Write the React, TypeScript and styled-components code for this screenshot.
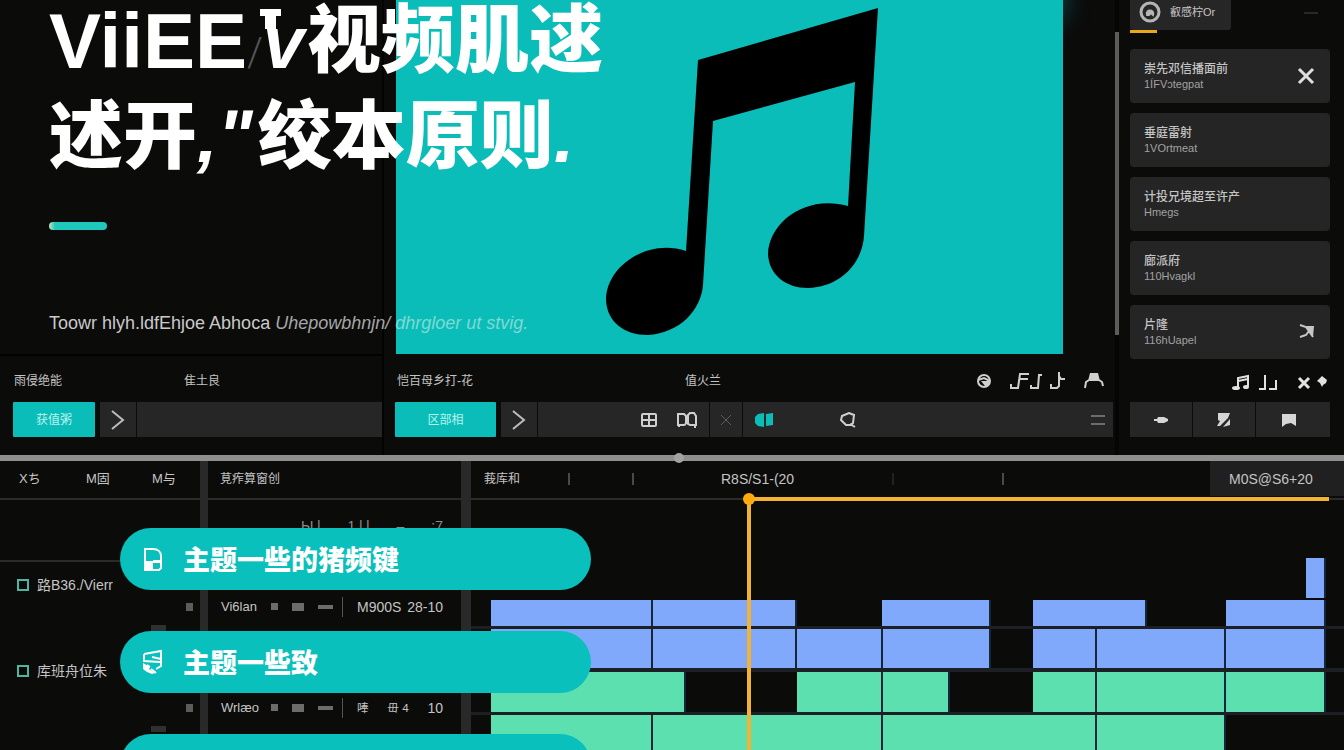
import React from "react";
import styled, { createGlobalStyle } from "styled-components";

const teal = "#0bbdb8";
const panel = "#262626";
const ink = "#c4c4c4";
const blue = "#80a8fb";
const green = "#5ce0b0";
const amber = "#f2b234";

const Global = createGlobalStyle`
  *, *::before, *::after { box-sizing: border-box; }
  body {
    margin: 0;
    background: #0b0b0a;
    color: ${ink};
    font-family: "Liberation Sans", "Noto Sans CJK SC", sans-serif;
    font-size: 12px;
    line-height: 16px;
  }
  button { font: inherit; color: inherit; border: 0; padding: 0; background: none; cursor: pointer; }
  h1, h2, p, ul { margin: 0; padding: 0; font-weight: inherit; font-size: inherit; }
  ul { list-style: none; }
  svg { display: block; flex: none; }
`;

const Page = styled.div`
  display: flex;
  flex-direction: column;
  min-height: 100vh;
  overflow: hidden;
`;

/* ---------- upper half ---------- */

const Upper = styled.section`
  position: relative;
  display: grid;
  grid-template-columns: 384px minmax(0, 1fr) 4px 225px;
  height: 455px;
`;

const LeftPane = styled.div`
  display: flex;
  flex-direction: column;
  border-right: 2px solid #030303;
`;

const LeftBlank = styled.div`
  height: 356px;
  border-bottom: 2px solid #020202;
`;

const CenterPane = styled.div`
  display: flex;
  flex-direction: column;
`;

const Stage = styled.div`
  height: 354px;
  margin: 0 52px 2px 12px;
  background: ${teal};
  box-shadow: 24px -310px 24px -24px rgba(11, 189, 184, 0.4);
  svg { width: 100%; height: 354px; }
`;

const Captions = styled.div<{ $inset: number; $h?: number }>`
  display: flex;
  align-items: center;
  height: ${(p) => p.$h ?? 46}px;
  padding: 4px 0 0 ${(p) => p.$inset}px;
`;

const Caption = styled.span<{ $w?: number }>`
  width: ${(p) => (p.$w ? `${p.$w}px` : "auto")};
  white-space: nowrap;
`;

const CaptionTools = styled.div<{ $gap: number; $end: number }>`
  display: flex;
  align-items: center;
  gap: ${(p) => p.$gap}px;
  margin-left: auto;
  padding-right: ${(p) => p.$end}px;
`;

const Bar = styled.div<{ $inset: number; $end: number }>`
  display: flex;
  height: 35px;
  gap: 1px;
  padding: 0 ${(p) => p.$end}px 0 ${(p) => p.$inset}px;
`;

const Primary = styled.button<{ $w: number }>`
  width: ${(p) => p.$w}px;
  margin-right: 4px;
  background: ${teal};
  color: #b9f3ee;
  border-radius: 1px;
`;

const Cell = styled.button<{ $w?: number }>`
  display: flex;
  align-items: center;
  justify-content: center;
  flex: ${(p) => (p.$w ? `0 0 ${p.$w}px` : "1 1 0")};
  background: ${panel};
`;

const Field = styled.div<{ $w?: number; $gap?: number }>`
  display: flex;
  align-items: center;
  flex: ${(p) => (p.$w ? `0 0 ${p.$w}px` : "1 1 0")};
  justify-content: ${(p) => (p.$w ? "flex-end" : "flex-start")};
  gap: ${(p) => p.$gap ?? 0}px;
  padding: 0 12px;
  background: ${panel};
  button:last-child:nth-child(3) { margin-left: auto; margin-right: -4px; }
`;

const ScrollTrack = styled.div`
  padding-top: 32px;
  background: #050505;
`;

const ScrollThumb = styled.div`
  height: 303px;
  background: #5c5c5c;
`;

const RightPane = styled.aside`
  display: flex;
  flex-direction: column;
  padding: 0 14px 0 11px;
`;

const TabRow = styled.div`
  display: flex;
  height: 49px;
`;

const Tab = styled.button`
  position: relative;
  display: flex;
  align-items: center;
  gap: 9px;
  width: 101px;
  height: 30px;
  padding: 0 9px 7px;
  background: ${panel};
  border-radius: 0 0 3px 3px;
  font-size: 11px;
  &::after {
    content: "";
    position: absolute;
    left: 0;
    top: 30px;
    width: 27px;
    height: 3px;
    background: #eaa81e;
  }
`;

const Dash = styled.span`
  width: 14px;
  height: 2px;
  margin: 12px 12px 0 auto;
  background: #292929;
`;

const Cards = styled.ul`
  display: flex;
  flex-direction: column;
  gap: 10px;
`;

const Card = styled.li`
  display: flex;
  justify-content: space-between;
  height: 54px;
  padding: 12px 14px 0;
  border-radius: 4px;
  background: #252525;
`;

const CardTitle = styled.h2`
  font-size: 12px;
  line-height: 16px;
  font-weight: 500;
`;

const CardNote = styled.p`
  font-size: 11px;
  line-height: 14px;
  color: #a2a2a2;
`;

const CardAction = styled.button`
  align-self: flex-start;
  padding-top: 6px;
`;

const Hero = styled.header`
  position: absolute;
  left: 49px;
  top: 0;
  color: #fff;
`;

const Title = styled.h1`
  display: flex;
  flex-direction: column;
  gap: 28px;
  font-family: "Noto Sans CJK SC", sans-serif;
  font-weight: 900;
  font-size: 74px;
  line-height: 68px;
  white-space: nowrap;
`;

const TitleLine = styled.span`
  display: block;
  height: 68px;
`;

const Latin = styled.span`
  font-family: "Liberation Sans", sans-serif;
  font-weight: 700;
  font-size: 78px;
  line-height: 0;
  vertical-align: -2px;
`;

const Slash = styled.span`
  font-family: Roboto, sans-serif;
  font-size: 40px;
  line-height: 0;
  font-weight: 300;
  color: #555;
`;

const Vee = styled.span`
  position: relative;
  padding-right: 3px;
  font-family: "Liberation Sans", sans-serif;
  font-size: 74px;
  line-height: 0;
  font-style: italic;
  vertical-align: -2px;
  &::before {
    content: "";
    position: absolute;
    left: -3px;
    top: 8px;
    width: 21px;
    height: 7px;
    background: #fff;
  }
  &::after {
    content: "";
    position: absolute;
    left: 2px;
    top: 8px;
    width: 11px;
    height: 20px;
    background: #fff;
  }
`;

const Point = styled.span<{ $pad?: number }>`
  padding-right: ${(p) => p.$pad ?? 0}px;
  font-family: "Liberation Sans", sans-serif;
  font-style: italic;
  line-height: 0;
`;

const Accent = styled.div`
  width: 58px;
  height: 8px;
  margin: 58px 0 81px;
  border-radius: 4px;
  background: linear-gradient(90deg, #cfe0b8, #1ec8bd 6px);
`;

const Tagline = styled.p`
  font-size: 18px;
  line-height: 24px;
  color: #c9c9c9;
  white-space: nowrap;
  i { color: #7fd9d5; }
  em { color: #a6a6a6; }
`;

/* ---------- splitter ---------- */

const Splitter = styled.div`
  position: relative;
  height: 6px;
  background: #8f8f8f;
  &::after {
    content: "";
    position: absolute;
    left: 50%;
    top: -2px;
    width: 10px;
    height: 10px;
    margin-left: 2px;
    border-radius: 50%;
    background: #a3a3a3;
  }
`;

/* ---------- lower half ---------- */

const Lower = styled.section`
  position: relative;
  display: grid;
  grid-template-columns: 200px 261px minmax(0, 1fr);
  flex: 1 0 289px;
  height: 289px;
  overflow: hidden;
`;

const Head = styled.div<{ $inset: number }>`
  display: flex;
  align-items: center;
  height: 39px;
  padding: 0 0 2px ${(p) => p.$inset}px;
  border-bottom: 2px solid #2b2b2b;
`;

const MenuButton = styled.button<{ $w: number }>`
  width: ${(p) => p.$w}px;
  text-align: left;
  font-size: 13px;
`;

const Names = styled.div`
  height: 62px;
  border-bottom: 2px solid #2b2b2b;
`;

const TrackCols = styled.div`
  display: flex;
  justify-content: space-between;
`;

const TrackNames = styled.div`
  display: flex;
  flex-direction: column;
  gap: 62px;
  padding: 11px 0 0 17px;
`;

const TrackLabel = styled.label`
  display: flex;
  align-items: center;
  gap: 8px;
  height: 24px;
  font-size: 14px;
  white-space: nowrap;
`;

const Tick = styled.input`
  appearance: none;
  width: 12px;
  height: 12px;
  margin: 0;
  border: 2px solid #4fb5a3;
`;

const Flags = styled.div`
  width: 49px;
`;

const Flag = styled.div`
  display: flex;
  flex-direction: column;
  gap: 14px;
  height: 101px;
  padding-top: 41px;
  &::before { content: ""; width: 7px; height: 8px; margin-left: 35px; background: #5c5c5c; }
  &::after { content: ""; width: 15px; height: 6px; background: #303030; }
`;

const Middle = styled.div`
  border-left: 8px solid #292929;
`;

const Meta = styled.div<{ $h: number; $dim?: boolean }>`
  display: flex;
  align-items: center;
  height: ${(p) => p.$h}px;
  padding: 0 18px 0 13px;
  font-size: 14px;
  white-space: nowrap;
  color: ${(p) => (p.$dim ? "#8c8c8c" : ink)};
`;

const MetaName = styled.span`
  width: 50px;
  font-size: 13px;
`;

const Chip = styled.span<{ $w: number; $h: number }>`
  width: ${(p) => p.$w}px;
  height: ${(p) => p.$h}px;
  margin-right: 14px;
  background: #6c6c6c;
`;

const Rule = styled.span`
  width: 1px;
  height: 20px;
  margin: 0 14px 0 -5px;
  background: #555;
`;

const Push = styled.span<{ $lead?: number }>`
  display: flex;
  justify-content: space-between;
  flex: 1;
  padding-left: ${(p) => p.$lead ?? 0}px;
`;

const Timeline = styled.div`
  position: relative;
  display: flex;
  flex-direction: column;
  border-left: 10px solid #292929;
`;

const Ruler = styled.div`
  display: grid;
  grid-template-columns: 97fr 64fr 89fr 171fr 110fr 208fr 134fr;
  align-items: center;
  height: 39px;
  padding-bottom: 2px;
  border-bottom: 2px solid #2b2b2b;
  font-size: 14px;
  white-space: nowrap;
`;

const Mark = styled.span<{ $dim?: boolean }>`
  width: 2px;
  height: 12px;
  background: ${(p) => (p.$dim ? "#222" : "#4a4a4a")};
`;

const First = styled.span`
  padding-left: 13px;
  font-size: 12px;
`;

const EndStamp = styled.span`
  display: flex;
  align-items: center;
  align-self: stretch;
  padding-left: 19px;
  background: #202020;
`;

const Tracks = styled.div`
  display: flex;
  flex-direction: column;
  flex: 1;
  padding-top: 58px;
`;

const Track = styled.div<{ $h: number; $line: number; $bare?: boolean }>`
  display: flex;
  flex: ${(p) => (p.$h ? `0 0 ${p.$h}px` : "1 0 35px")};
  padding: 0 18px 0 20px;
  border-bottom: ${(p) => p.$line}px solid ${(p) => (p.$bare ? "#0b0b0a" : "#1c1f24")};
`;

const Clip = styled.div<{ $span: number; $color: string }>`
  flex: ${(p) => p.$span} 1 0;
  min-width: 0;
  background: ${(p) => p.$color};
  box-shadow: ${(p) => (p.$color === "transparent" ? "none" : "inset -2px 0 #17273a")};
`;

const Playhead = styled.div`
  position: absolute;
  left: 276px;
  right: 15px;
  top: 36px;
  bottom: 0;
  border-top: 4px solid ${amber};
  border-left: 4px solid ${amber};
  &::before {
    content: "";
    position: absolute;
    left: -8px;
    top: -8px;
    width: 12px;
    height: 12px;
    border-radius: 50%;
    background: #ffab0d;
  }
`;

const Pills = styled.div`
  position: absolute;
  left: 120px;
  top: 67px;
  display: flex;
  flex-direction: column;
  gap: 41px;
  width: 471px;
`;

const Pill = styled.button`
  display: flex;
  align-items: center;
  gap: 19px;
  height: 62px;
  padding-left: 21px;
  border-radius: 31px;
  background: #0ac0bc;
  color: #fff;
  font-family: "Noto Sans CJK SC", sans-serif;
  font-size: 27px;
  font-weight: 900;
`;

/* ---------- drawings ---------- */

type IconProps = { w: number; h: number; children: React.ReactNode; color?: string; sw?: number };

const Icon = ({ w, h, children, color = "#cfcfcf", sw = 2 }: IconProps) => (
  <svg width={w} height={h} viewBox={`0 0 ${w} ${h}`} fill="none" stroke={color} strokeWidth={sw} aria-hidden="true">
    {children}
  </svg>
);

const Chevron = () => (
  <Icon w={14} h={20} color="#bdbdbd">
    <path d="M1 1L12 10L1 19" />
  </Icon>
);

const BigNote = () => (
  <svg viewBox="396 0 667 354" preserveAspectRatio="xMidYMax meet" aria-hidden="true">
    <path
      d="M698 60L878 8L864 236C862 264 840 287 808 288C786 288 769 275 768 254C769 222 806 194 848 206L855 82L713 121L703 285C701 310 680 333 648 335C624 335 607 322 606 300C606 266 648 238 686 251Z"
      fill="#000"
    />
  </svg>
);

const cards = [
  { title: "崇先邓信播面前", note: "1ÍFVɔtegpat", action: "close" },
  { title: "垂庭雷射", note: "1VOrtmeat" },
  { title: "计投兄境超至许产", note: "Hmegs" },
  { title: "廊派府", note: "110Hvagkl" },
  { title: "片隆", note: "116hUapel", action: "send" },
];

const b = (n: number): [number, string] => [n, blue];
const g = (n: number): [number, string] => [n, green];
const x = (n: number): [number, string] => [n, "transparent"];

const tracks: { h: number; line: number; clips: [number, string][]; bare?: boolean }[] = [
  { h: 42, line: 2, bare: true, clips: [x(815), b(20)] },
  { h: 29, line: 3, clips: [b(162), b(144), x(85), b(109), x(42), b(114), x(79), b(100)] },
  { h: 43, line: 4, clips: [b(162), b(144), b(86), b(108), x(42), b(64), b(129), b(100)] },
  { h: 43, line: 3, clips: [g(195), x(111), g(86), g(67), x(83), g(64), g(129), g(100)] },
  { h: 0, line: 0, clips: [g(162), g(230), g(214), g(129), x(100)] },
];

export default function App() {
  return (
    <>
      <Global />
      <Page>
        <Upper>
          <LeftPane>
            <LeftBlank />
            <Captions $inset={14}>
              <Caption $w={170}>雨侵绝能</Caption>
              <Caption>隹土良</Caption>
            </Captions>
            <Bar $inset={13} $end={0}>
              <Primary $w={82}>获值粥</Primary>
              <Cell $w={36} aria-label="Next"><Chevron /></Cell>
              <Field />
            </Bar>
          </LeftPane>

          <CenterPane>
            <Stage><BigNote /></Stage>
            <Captions $inset={13}>
              <Caption $w={288}>恺百母乡打-花</Caption>
              <Caption>值火兰</Caption>
              <CaptionTools $gap={18} $end={11}>
                <Icon w={16} h={16}>
                  <circle cx="8" cy="8" r="6" />
                  <path d="M2 7L8 5L14 8" />
                  <path d="M5 8H14L12 13H9Z" fill="#cfcfcf" stroke="none" />
                </Icon>
                <CaptionTools $gap={8} $end={0}>
                  <Icon w={32} h={18}>
                    <path d="M1 12V16H8L10 2H19M10 7H18M21 13V16H28L29 3H32" />
                  </Icon>
                  <Icon w={16} h={18}>
                    <path d="M9 0V14L7 16H1V12M9 4L11 7H15" />
                  </Icon>
                </CaptionTools>
                <Icon w={20} h={16}>
                  <path d="M6 0H14L16 8H4Z" fill="#cfcfcf" stroke="none" />
                  <path d="M5 7L2 9L1 15M15 7L18 9L19 13" />
                </Icon>
              </CaptionTools>
            </Captions>
            <Bar $inset={11} $end={2}>
              <Primary $w={101}>区部相</Primary>
              <Cell $w={36} aria-label="Next"><Chevron /></Cell>
              <Field $w={171} $gap={20}>
                <button aria-label="Grid">
                  <Icon w={16} h={16}>
                    <rect x="1" y="2" width="14" height="12" rx="1" />
                    <path d="M8 2V14M1 8H15" />
                  </Icon>
                </button>
                <button aria-label="Pages">
                  <Icon w={20} h={16}>
                    <path d="M9 12L7 13H1V2H7L9 4V12M11 12V3L13 1H17L19 4V13H13ZM2 15V12M18 16V12" />
                  </Icon>
                </button>
              </Field>
              <Cell $w={32} aria-label="Clear">
                <Icon w={10} h={10} color="#5c5c5c" sw={1}><path d="M0 0L10 10M10 0L0 10" /></Icon>
              </Cell>
              <Field $gap={67}>
                <button aria-label="Split">
                  <Icon w={18} h={16} color={teal}>
                    <path d="M9 1V15L3 14L0 11V5L3 2ZM11 2L18 1V13L11 14Z" fill={teal} stroke="none" />
                  </Icon>
                </button>
                <button aria-label="Lasso">
                  <Icon w={16} h={16}>
                    <path d="M2 4L9 1L14 3L13 11L11 13H6L1 8ZM10 12L15 15" />
                  </Icon>
                </button>
                <button aria-label="Menu">
                  <Icon w={14} h={12} color="#6c6c6c"><path d="M0 2H14M0 10H14" /></Icon>
                </button>
              </Field>
            </Bar>
          </CenterPane>

          <ScrollTrack><ScrollThumb /></ScrollTrack>

          <RightPane>
            <TabRow>
              <Tab>
                <Icon w={22} h={22} color="#b5b5b5" sw={3}>
                  <circle cx="11" cy="11" r="9" />
                  <path d="M8 14C6 8 16 8 14 14L12 12L10 14Z" fill="#b5b5b5" strokeWidth="2" />
                </Icon>
                叡感柠Or
              </Tab>
              <Dash />
            </TabRow>
            <Cards>
              {cards.map((c) => (
                <Card key={c.title}>
                  <div>
                    <CardTitle>{c.title}</CardTitle>
                    <CardNote>{c.note}</CardNote>
                  </div>
                  {c.action === "close" && (
                    <CardAction aria-label="Close">
                      <Icon w={20} h={18} color="#dedede" sw={3}><path d="M3 2L17 16M17 2L3 16" /></Icon>
                    </CardAction>
                  )}
                  {c.action === "send" && (
                    <CardAction aria-label="Send">
                      <Icon w={18} h={18} color="#c6c6c6">
                        <path d="M2 2L8 4L15 14M2 14L8 12L14 4" />
                        <path d="M8 3H16L15 14L11 9Z" fill="#c6c6c6" stroke="none" />
                      </Icon>
                    </CardAction>
                  )}
                </Card>
              ))}
            </Cards>
            <Captions $inset={0} $h={43}>
              <CaptionTools $gap={9} $end={2}>
                <Icon w={18} h={18} color="#e2e2e2">
                  <path d="M6 14V4L16 2V12M6 7L16 5" />
                  <ellipse cx="4" cy="14" rx="4" ry="2" fill="#e2e2e2" stroke="none" />
                  <ellipse cx="14" cy="13" rx="3" ry="2" fill="#e2e2e2" stroke="none" />
                </Icon>
                <Icon w={18} h={18} color="#e2e2e2">
                  <path d="M6 1V16M0 15H7M17 6V15M10 15H18" />
                </Icon>
                <Icon w={42} h={16} color="#e2e2e2" sw={3}>
                  <path d="M13 3L23 13M23 3L13 13" />
                  <path d="M36 1L41 5L40 8L37 10L36 12L34 8L31 6Z" fill="#e2e2e2" stroke="none" />
                </Icon>
              </CaptionTools>
            </Captions>
            <Bar $inset={0} $end={0}>
              <Cell $w={62} aria-label="Insert">
                <Icon w={16} h={8} color="#d6d6d6"><path d="M1 3H4L5 1H11L15 3V5L11 7H5L4 5H1Z" fill="#d6d6d6" stroke="none" /></Icon>
              </Cell>
              <Cell $w={62} aria-label="Edit">
                <Icon w={16} h={16} color="#d6d6d6">
                  <path d="M2 1H14L12 6L4 14H1L4 9L2 8ZM7 15L14 7V13Z" fill="#d6d6d6" stroke="none" />
                </Icon>
              </Cell>
              <Cell aria-label="Bookmark">
                <Icon w={24} h={14} color="#d6d6d6">
                  <path d="M1 1H15V13L10 10L5 11L1 14Z" fill="#d6d6d6" stroke="none" />
                </Icon>
              </Cell>
            </Bar>
          </RightPane>

          <Hero>
            <Title>
              <TitleLine>
                <Latin>ViiEE</Latin><Slash>/</Slash><Vee>v</Vee>视频肌逑
              </TitleLine>
              <TitleLine>
                述开<Point>,</Point><Point $pad={5}>"</Point>绞本原则<Point>.</Point>
              </TitleLine>
            </Title>
            <Accent />
            <Tagline>
              Toowr hlyh.ldfEhjoe Abhoca <em>Uhepowbhnjn/</em> <i>dhrgloer ut stvig.</i>
            </Tagline>
          </Hero>
        </Upper>

        <Splitter role="separator" />

        <Lower>
          <div>
            <Head $inset={19}>
              <MenuButton $w={67}>Xち</MenuButton>
              <MenuButton $w={66}>M固</MenuButton>
              <MenuButton $w={30}>M与</MenuButton>
            </Head>
            <Names />
            <TrackCols>
              <TrackNames>
                <TrackLabel><Tick type="checkbox" />路B36./Vierr</TrackLabel>
                <TrackLabel><Tick type="checkbox" />库班舟位朱</TrackLabel>
              </TrackNames>
              <Flags>
                <Flag />
                <Flag />
              </Flags>
            </TrackCols>
          </div>

          <Middle>
            <Head $inset={12}>莧痄算窗创</Head>
            <Meta $h={52} $dim>
              <Push $lead={80}><span>Ы.l</span><span>1 l l</span><span>–</span><span>:7</span></Push>
            </Meta>
            <Meta $h={109}>
              <MetaName>Vi6lan</MetaName>
              <Chip $w={7} $h={7} />
              <Chip $w={12} $h={8} />
              <Chip $w={15} $h={4} />
              <Rule />
              <Push><span>M900S</span><span>28-10</span></Push>
            </Meta>
            <Meta $h={93}>
              <MetaName>Wrlæo</MetaName>
              <Chip $w={7} $h={7} />
              <Chip $w={12} $h={8} />
              <Chip $w={15} $h={4} />
              <Rule />
              <Push><small>唪</small><small>毌 4</small><span>10</span></Push>
            </Meta>
          </Middle>

          <Timeline>
            <Ruler>
              <First>莪库和</First>
              <Mark />
              <Mark />
              <span>R8S/S1-(20</span>
              <Mark $dim />
              <Mark />
              <EndStamp>M0S@S6+20</EndStamp>
            </Ruler>
            <Tracks>
              {tracks.map((t, i) => (
                <Track key={i} $h={t.h} $line={t.line} $bare={t.bare}>
                  {t.clips.map(([span, color], j) => (
                    <Clip key={j} $span={span} $color={color} />
                  ))}
                </Track>
              ))}
            </Tracks>
            <Playhead />
          </Timeline>

          <Pills>
            <Pill>
              <Icon w={23} h={26} color="#fff">
                <path d="M4 24V3H12C17 3 20 6 20 10V22L18 24Z" />
                <path d="M4 15H12V24H4ZM12 14H21V17H12Z" fill="#fff" stroke="none" />
              </Icon>
              主题一些的猪频键
            </Pill>
            <Pill>
              <Icon w={23} h={26} color="#fff">
                <path d="M3 5L20 2V17L15 20M3 5V12L19 13M11 8L20 10M6 16L9 18M10 20L15 24" />
                <path d="M2 14L9 18L8 20L14 24L11 25L6 23L2 20Z" fill="#fff" stroke="none" />
              </Icon>
              主题一些致
            </Pill>
            <Pill aria-label="主题" />
          </Pills>
        </Lower>
      </Page>
    </>
  );
}
